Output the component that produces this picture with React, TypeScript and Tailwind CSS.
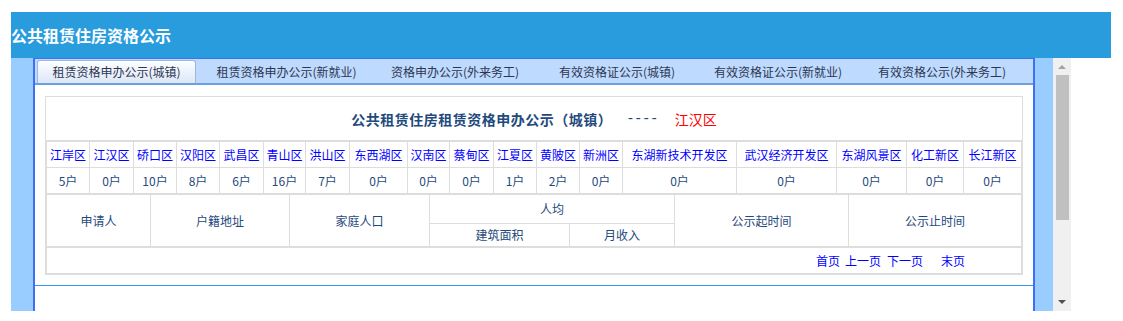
import React from "react";

const districts: [string, string][] = [
  ["江岸区", "5户"],
  ["江汉区", "0户"],
  ["硚口区", "10户"],
  ["汉阳区", "8户"],
  ["武昌区", "6户"],
  ["青山区", "16户"],
  ["洪山区", "7户"],
  ["东西湖区", "0户"],
  ["汉南区", "0户"],
  ["蔡甸区", "0户"],
  ["江夏区", "1户"],
  ["黄陂区", "2户"],
  ["新洲区", "0户"],
  ["东湖新技术开发区", "0户"],
  ["武汉经济开发区", "0户"],
  ["东湖风景区", "0户"],
  ["化工新区", "0户"],
  ["长江新区", "0户"],
];

const tabs: { label: string; w: string }[] = [
  { label: "租赁资格申办公示(新就业)", w: "w-[173px]" },
  { label: "资格申办公示(外来务工)", w: "w-[164px]" },
  { label: "有效资格证公示(城镇)", w: "w-[160px]" },
  { label: "有效资格证公示(新就业)", w: "w-[162px]" },
  { label: "有效资格公示(外来务工)", w: "w-[166px]" },
];

function Cell({ children, className = "" }: { children?: React.ReactNode; className?: string }) {
  return (
    <div className={`bg-white flex items-center justify-center leading-none ${className}`}>
      {children}
    </div>
  );
}

export default function App() {
  return (
    <div className="w-[1123px] h-[321px] bg-white pt-[12px] pl-[11px] font-['Noto_Sans_CJK_SC',sans-serif] overflow-hidden">
      {/* Header */}
      <div className="w-[1100px] h-[46px] bg-[#299cdd] flex items-center text-white font-bold text-[16px] leading-none">
        公共租赁住房资格公示
      </div>

      <div className="flex h-[253px]">
        {/* left light blue */}
        <div className="w-[22px] bg-[#99ccff]" />

        {/* frame */}
        <div className="w-[1002px] border-l-2 border-r-2 border-t border-[#3f6ff5] flex flex-col bg-white">
          {/* tab strip */}
          <div className="h-[26px] bg-[#bedaff] border-b-2 border-[#6c9fdf] flex items-end pl-[2px] text-[12px] text-[#2d3650]">
            <div className="w-[159px] h-[23px] border border-b-0 border-[#9fb7d9] rounded-t-[3px] bg-gradient-to-b from-[#fdfeff] to-[#dce7f7] flex items-center justify-center leading-none">
              租赁资格申办公示(城镇)
            </div>
            <div className="w-[4px]" />
            {tabs.map((t) => (
              <div key={t.label} className={`${t.w} h-[23px] flex items-center justify-center leading-none`}>
                {t.label}
              </div>
            ))}
          </div>

          {/* content */}
          <div className="pt-[11px] px-[10px] pb-[10px] border-b border-[#3399ee] bg-white">
            <div className="w-[978px] border border-[#dddddd] text-[12px] text-[#1f4a7c]">
              {/* title */}
              <div className="h-[44px] border-b border-[#dddddd] flex items-center justify-center leading-none">
                <span className="font-bold text-[14px] tracking-[0.5px]">公共租赁住房租赁资格申办公示（城镇）</span>
                <span className="ml-[14px] text-[14px] font-['Liberation_Mono',monospace] tracking-[-0.5px]">----</span>
                <span className="ml-[17px] text-[14px] text-[#ff0000]">江汉区</span>
              </div>

              {/* districts */}
              <div className="grid grid-cols-[42px_43px_42px_42px_43px_41px_43px_57px_41px_43px_42px_42px_42px_113px_99px_69px_56px_57px] grid-rows-[25px_25px] gap-px bg-[#dddddd] border border-[#dddddd]">
                {districts.map(([d]) => (
                  <Cell key={d} className="text-[#0000ff]">
                    {d}
                  </Cell>
                ))}
                {districts.map(([d, c]) => (
                  <Cell key={d + "c"}>{c}</Cell>
                ))}
              </div>

              {/* table header */}
              <div className="grid grid-cols-[103px_138px_139px_139px_104px_173px_172px] grid-rows-[28px_22px] gap-px bg-[#dddddd] border border-[#dddddd]">
                <Cell className="row-span-2">申请人</Cell>
                <Cell className="row-span-2">户籍地址</Cell>
                <Cell className="row-span-2">家庭人口</Cell>
                <Cell className="col-span-2">人均</Cell>
                <Cell className="row-span-2">公示起时间</Cell>
                <Cell className="row-span-2">公示止时间</Cell>
                <Cell>建筑面积</Cell>
                <Cell>月收入</Cell>
              </div>

              {/* pager */}
              <div className="h-[27px] border border-[#dddddd] bg-white flex items-center justify-end pr-[56px] text-[#0000ff] leading-none">
                <span>首页</span>
                <span className="ml-[5px]">上一页</span>
                <span className="ml-[6px]">下一页</span>
                <span className="ml-[18px]">末页</span>
              </div>
            </div>
          </div>
          <div className="flex-1 bg-white" />
        </div>

        {/* right light blue */}
        <div className="w-[18px] bg-[#99ccff]" />

        {/* scrollbar */}
        <div className="w-[18px] bg-[#f0f0f0] flex flex-col items-center">
          <div className="mt-[7px] w-0 h-0 border-l-[4px] border-r-[4px] border-b-[4px] border-l-transparent border-r-transparent border-b-[#a3a3a3]" />
          <div className="mt-[6px] w-[13px] h-[145px] bg-[#c0c0c0]" />
          <div className="flex-1" />
          <div className="mb-[7px] w-0 h-0 border-l-[4px] border-r-[4px] border-t-[4px] border-l-transparent border-r-transparent border-t-[#505050]" />
        </div>
      </div>
    </div>
  );
}
